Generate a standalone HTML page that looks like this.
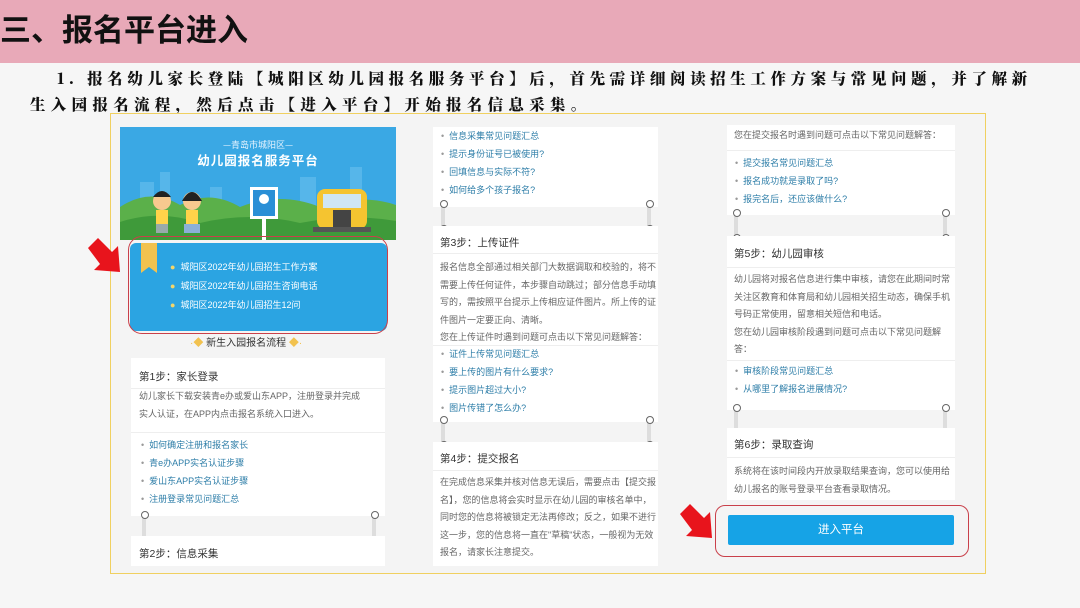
<!DOCTYPE html>
<html><head><meta charset="utf-8">
<style>
*{margin:0;padding:0;box-sizing:border-box}
body{width:1080px;height:608px;overflow:hidden;background:#f6f6f6;font-family:"Liberation Sans","Noto Sans CJK SC",sans-serif;position:relative}
.a{position:absolute}
.hdr{left:0;top:0;width:1080px;height:63px;background:#e8a9b8}
.title{left:0;top:11px;font-size:31px;font-weight:bold;color:#111;letter-spacing:0px;line-height:40px}
.p{font-family:"Noto Serif CJK SC","Liberation Serif",serif;font-weight:900;font-size:15.5px;color:#111;white-space:nowrap;line-height:20px}
.frame{left:110px;top:113px;width:876px;height:461px;border:1.5px solid #f0d060;background:#f4f4f4}
.card{background:#fff}
.t{font-size:9px;color:#666;white-space:nowrap;line-height:17.5px}
.h{font-size:10.5px;color:#333;white-space:nowrap}
.l{font-size:9px;color:#2e7ea8;white-space:nowrap;line-height:18px}
.l span{color:#999;margin-right:5px}
.dv{height:1px;background:#eee}
.cn{width:4px;background:#ddd;border-radius:2px}
.cn:before,.cn:after{content:"";position:absolute;left:-1px;width:6px;height:6px;border:1.3px solid #666;border-radius:50%;background:#fff}
.cn:before{top:-3px}.cn:after{bottom:-3px}
</style></head><body>
<div class="a hdr"></div>
<div class="a title">三、报名平台进入</div>
<div class="a p" style="left:57px;top:68px;letter-spacing:4.6px">1. 报名幼儿家长登陆【城阳区幼儿园报名服务平台】后，首先需详细阅读招生工作方案与常见问题，并了解新</div>
<div class="a p" style="left:30px;top:94px;letter-spacing:5.3px">生入园报名流程，然后点击【进入平台】开始报名信息采集。</div>
<div class="a frame"></div>

<!-- column 1 -->
<svg class="a" style="left:120px;top:127px" width="276" height="113" viewBox="0 0 276 113">
<rect width="276" height="113" fill="#3aa8e4"/>
<g fill="#56b6ea"><rect x="20" y="55" width="14" height="40"/><rect x="40" y="45" width="10" height="50"/><rect x="180" y="50" width="16" height="45"/><rect x="230" y="40" width="12" height="55"/><rect x="90" y="60" width="12" height="35"/></g>
<path d="M0 80 Q30 60 60 78 Q90 62 120 80 Q160 64 200 80 Q240 66 276 78 V113 H0Z" fill="#5bb04a"/>
<path d="M0 95 Q40 82 80 96 Q130 84 180 96 Q230 86 276 94 V113 H0Z" fill="#3f9a3a"/>
<text x="138" y="21" font-size="9" fill="#e6f4ff" text-anchor="middle" font-family="Noto Sans CJK SC">—青岛市城阳区—</text>
<text x="138" y="38" font-size="12.5" font-weight="bold" fill="#fff" text-anchor="middle" font-family="Noto Sans CJK SC" letter-spacing="1">幼儿园报名服务平台</text>
<circle cx="42" cy="74" r="9" fill="#f7c98f"/><path d="M33 70 Q42 58 51 70Z" fill="#222"/><rect x="36" y="83" width="12" height="14" fill="#ffd34a"/><rect x="36" y="97" width="12" height="9" fill="#9aa"/>
<circle cx="72" cy="74" r="9" fill="#f7c98f"/><path d="M62 74 Q72 56 82 74Z" fill="#222"/><rect x="66" y="83" width="12" height="14" fill="#ffd34a"/><rect x="64" y="97" width="16" height="9" fill="#8bb0d8"/>
<rect x="130" y="60" width="28" height="32" fill="#fff"/><rect x="133" y="63" width="22" height="26" fill="#2a8fd6"/><circle cx="144" cy="72" r="5" fill="#fff"/><rect x="142" y="92" width="4" height="21" fill="#fff"/>
<rect x="197" y="62" width="50" height="40" rx="8" fill="#f5c430"/><rect x="203" y="67" width="38" height="14" fill="#cfe6f3"/><rect x="213" y="83" width="18" height="17" fill="#444"/><rect x="193" y="100" width="58" height="5" fill="#555"/>
</svg>
<div class="a" style="left:130px;top:243px;width:257px;height:88px;background:#2ba4e2;border-radius:6px"></div>
<div class="a" style="left:141px;top:243px;width:16px;height:30px;background:#f2c24f;clip-path:polygon(0 0,100% 0,100% 100%,50% 80%,0 100%)"></div>
<div class="a" style="left:128px;top:236px;width:260px;height:98px;border:1.3px solid #c9404a;border-radius:14px"></div>
<div class="a" style="left:170px;top:258px;line-height:19px;font-size:9px;color:#fff;white-space:nowrap">
<div><span style="color:#f3d66a">●</span>&nbsp;&nbsp;城阳区2022年幼儿园招生工作方案</div>
<div><span style="color:#f3d66a">●</span>&nbsp;&nbsp;城阳区2022年幼儿园招生咨询电话</div>
<div><span style="color:#f3d66a">●</span>&nbsp;&nbsp;城阳区2022年幼儿园招生12问</div></div>
<div class="a" style="left:190px;top:334px;font-size:10px;color:#333;white-space:nowrap"><span style="color:#f2c24f">·◆</span> 新生入园报名流程 <span style="color:#f2c24f">◆·</span></div>
<svg class="a" style="left:84px;top:236px" width="42" height="40"><path d="M4 12 L14 2 L28 16 L34 10 L36 36 L10 34 L16 28Z" fill="#e8141c"/></svg>

<div class="a card" style="left:131px;top:358px;width:254px;height:158px"></div>
<div class="a h" style="left:139px;top:369px">第1步：家长登录</div>
<div class="a dv" style="left:131px;top:388px;width:254px"></div>
<div class="a t" style="left:139px;top:388px">幼儿家长下载安装青e办或爱山东APP，注册登录并完成<br>实人认证，在APP内点击报名系统入口进入。</div>
<div class="a dv" style="left:131px;top:432px;width:254px"></div>
<div class="a l" style="left:141px;top:436px"><span>•</span>如何确定注册和报名家长<br><span>•</span>青e办APP实名认证步骤<br><span>•</span>爱山东APP实名认证步骤<br><span>•</span>注册登录常见问题汇总</div>
<div class="a cn" style="left:142px;top:514px;height:27px"></div>
<div class="a cn" style="left:372px;top:514px;height:27px"></div>
<div class="a card" style="left:131px;top:536px;width:254px;height:30px"></div>
<div class="a h" style="left:139px;top:546px">第2步：信息采集</div>

<!-- column 2 -->
<div class="a card" style="left:433px;top:127px;width:225px;height:80px"></div>
<div class="a l" style="left:441px;top:127px"><span>•</span>信息采集常见问题汇总<br><span>•</span>提示身份证号已被使用?<br><span>•</span>回填信息与实际不符?<br><span>•</span>如何给多个孩子报名?</div>
<div class="a cn" style="left:441px;top:203px;height:27px"></div>
<div class="a cn" style="left:647px;top:203px;height:27px"></div>
<div class="a card" style="left:433px;top:226px;width:225px;height:196px"></div>
<div class="a h" style="left:440px;top:235px">第3步：上传证件</div>
<div class="a dv" style="left:433px;top:253px;width:225px"></div>
<div class="a t" style="left:440px;top:259px">报名信息全部通过相关部门大数据调取和校验的，将不<br>需要上传任何证件，本步骤自动跳过；部分信息手动填<br>写的，需按照平台提示上传相应证件图片。所上传的证<br>件图片一定要正向、清晰。<br>您在上传证件时遇到问题可点击以下常见问题解答：</div>
<div class="a dv" style="left:433px;top:345px;width:225px"></div>
<div class="a l" style="left:441px;top:345px"><span>•</span>证件上传常见问题汇总<br><span>•</span>要上传的图片有什么要求?<br><span>•</span>提示图片超过大小?<br><span>•</span>图片传错了怎么办?</div>
<div class="a cn" style="left:441px;top:419px;height:27px"></div>
<div class="a cn" style="left:647px;top:419px;height:27px"></div>
<div class="a card" style="left:433px;top:442px;width:225px;height:124px"></div>
<div class="a h" style="left:440px;top:451px">第4步：提交报名</div>
<div class="a dv" style="left:433px;top:470px;width:225px"></div>
<div class="a t" style="left:440px;top:474px">在完成信息采集并核对信息无误后，需要点击【提交报<br>名】，您的信息将会实时显示在幼儿园的审核名单中，<br>同时您的信息将被锁定无法再修改；反之，如果不进行<br>这一步，您的信息将一直在"草稿"状态，一般视为无效<br>报名，请家长注意提交。</div>

<!-- column 3 -->
<div class="a card" style="left:727px;top:125px;width:228px;height:90px"></div>
<div class="a t" style="left:734px;top:127px">您在提交报名时遇到问题可点击以下常见问题解答：</div>
<div class="a dv" style="left:727px;top:150px;width:228px"></div>
<div class="a l" style="left:735px;top:154px"><span>•</span>提交报名常见问题汇总<br><span>•</span>报名成功就是录取了吗?<br><span>•</span>报完名后，还应该做什么?</div>
<div class="a cn" style="left:734px;top:212px;height:27px"></div>
<div class="a cn" style="left:943px;top:212px;height:27px"></div>
<div class="a card" style="left:727px;top:236px;width:228px;height:174px"></div>
<div class="a h" style="left:734px;top:246px">第5步：幼儿园审核</div>
<div class="a dv" style="left:727px;top:267px;width:228px"></div>
<div class="a t" style="left:734px;top:271px">幼儿园将对报名信息进行集中审核，请您在此期间时常<br>关注区教育和体育局和幼儿园相关招生动态，确保手机<br>号码正常使用，留意相关短信和电话。<br>您在幼儿园审核阶段遇到问题可点击以下常见问题解<br>答：</div>
<div class="a dv" style="left:727px;top:360px;width:228px"></div>
<div class="a l" style="left:735px;top:362px"><span>•</span>审核阶段常见问题汇总<br><span>•</span>从哪里了解报名进展情况?</div>
<div class="a cn" style="left:734px;top:407px;height:27px"></div>
<div class="a cn" style="left:943px;top:407px;height:27px"></div>
<div class="a card" style="left:727px;top:428px;width:228px;height:72px"></div>
<div class="a h" style="left:734px;top:437px">第6步：录取查询</div>
<div class="a dv" style="left:727px;top:457px;width:228px"></div>
<div class="a t" style="left:734px;top:463px">系统将在该时间段内开放录取结果查询，您可以使用给<br>幼儿报名的账号登录平台查看录取情况。</div>
<div class="a" style="left:728px;top:515px;width:226px;height:30px;background:#16a3e6;border-radius:2px;color:#fff;font-size:11.5px;text-align:center;line-height:30px">进入平台</div>
<div class="a" style="left:715px;top:505px;width:254px;height:52px;border:1.3px solid #c9404a;border-radius:10px"></div>
<svg class="a" style="left:676px;top:502px" width="42" height="40"><path d="M4 12 L14 2 L28 16 L34 10 L36 36 L10 34 L16 28Z" fill="#e8141c"/></svg>
</body></html>
